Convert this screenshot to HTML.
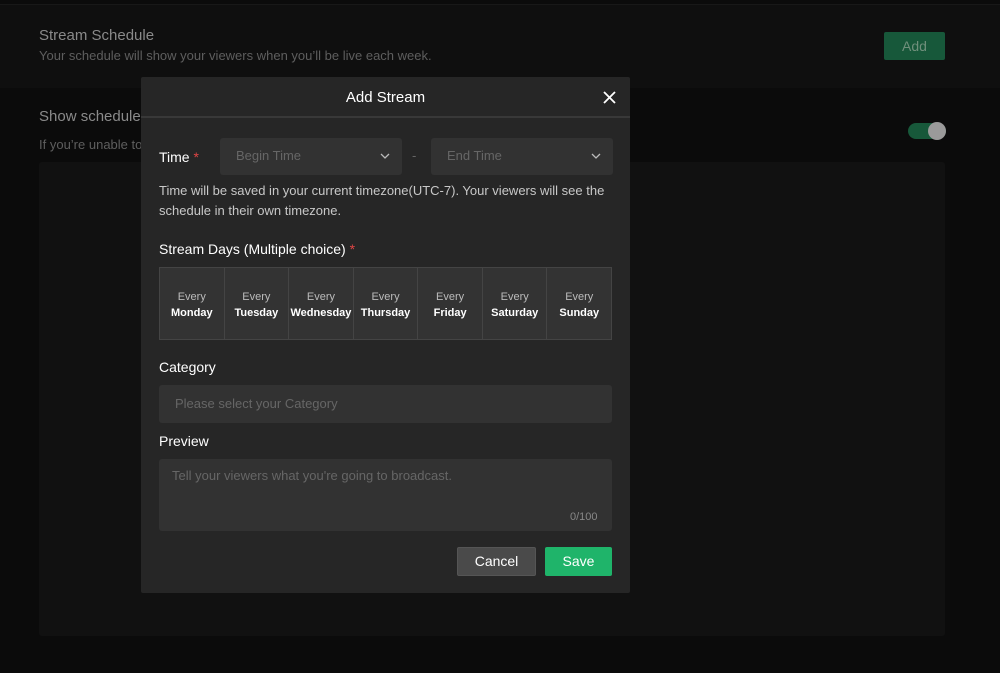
<!DOCTYPE html>
<html><head><style>
*{box-sizing:border-box;margin:0;padding:0}
body{width:1000px;height:673px;background:#0b0b0b;font-family:"Liberation Sans",sans-serif;position:relative;overflow:hidden}
.a{position:absolute}
.top{left:0;top:4px;width:1000px;height:84px;background:#0f0f0f;border-top:1px solid #181818}
.t1{left:39px;top:27px;font-size:15px;color:#8a8a8a}
.t2{left:39px;top:48px;font-size:13px;color:#5e5e5e}
.add{left:884px;top:32px;width:61px;height:28px;background:#17583a;border-radius:2px;color:#6f8f7b;font-size:14px;text-align:center;line-height:28px}
.s1{left:39px;top:108px;font-size:15px;color:#8a8a8a}
.s2{left:39px;top:137px;font-size:13px;color:#5e5e5e}
.tog{left:908px;top:123px;width:38px;height:16px;background:#17583a;border-radius:8px}
.tog i{position:absolute;right:0;top:-1px;width:18px;height:18px;border-radius:50%;background:#9a9a9a}
.panel{left:39px;top:162px;width:906px;height:474px;background:#111;border-radius:3px}
.m{left:141px;top:77px;width:489px;height:516px;background:#262626;border-radius:2px}
.hd{left:0;top:0;width:489px;height:41px;border-bottom:2px solid #383838;color:#fff;font-size:15px;text-align:center;line-height:41px}
.lb{color:#fff;font-size:14px}
.st{color:#e04545}
.inp{background:#323232;border-radius:3px;color:#666;font-size:13px}
.days{left:18px;top:190px;width:453px;height:73px;border:1px solid #444;display:flex;background:#333}
.days div{flex:1;border-right:1px solid #444;text-align:center;font-size:11px;color:#bbb;padding-top:21px;line-height:16px}
.days div:last-child{border-right:none}
.days b{color:#fff;font-weight:bold}
.btn{border-radius:2px;font-size:14px;text-align:center;line-height:27px;color:#fff}
</style></head><body>
<div class="a top"></div>
<div class="a t1">Stream Schedule</div>
<div class="a t2">Your schedule will show your viewers when you’ll be live each week.</div>
<div class="a add">Add</div>
<div class="a s1">Show schedule</div>
<div class="a s2">If you’re unable to</div>
<div class="a tog"><i></i></div>
<div class="a panel"></div>
<div class="a m">
 <div class="a hd">Add Stream</div>
 <svg class="a" style="left:462px;top:14px" width="13" height="13" viewBox="0 0 13 13"><path d="M1 1L12 12M12 1L1 12" stroke="#fff" stroke-width="1.8"/></svg>
 <div class="a lb" style="left:18px;top:72px">Time <span class="st">*</span></div>
 <div class="a inp" style="left:79px;top:61px;width:182px;height:37px;padding:10px 0 0 16px">Begin Time</div>
 <svg class="a" style="left:239px;top:76px" width="10" height="7"><path d="M1 1L5 5L9 1" stroke="#bbb" fill="none" stroke-width="1.3"/></svg>
 <div class="a" style="left:271px;top:71px;color:#666;font-size:13px">-</div>
 <div class="a inp" style="left:290px;top:61px;width:182px;height:37px;padding:10px 0 0 16px">End Time</div>
 <svg class="a" style="left:450px;top:76px" width="10" height="7"><path d="M1 1L5 5L9 1" stroke="#bbb" fill="none" stroke-width="1.3"/></svg>
 <div class="a" style="left:18px;top:104px;width:460px;color:#c8c8c8;font-size:13px;line-height:20px">Time will be saved in your current timezone(UTC-7). Your viewers will see the schedule in their own timezone.</div>
 <div class="a lb" style="left:18px;top:164px">Stream Days (Multiple choice) <span class="st">*</span></div>
 <div class="a days">
  <div>Every<br><b>Monday</b></div><div>Every<br><b>Tuesday</b></div><div>Every<br><b>Wednesday</b></div><div>Every<br><b>Thursday</b></div><div>Every<br><b>Friday</b></div><div>Every<br><b>Saturday</b></div><div>Every<br><b>Sunday</b></div>
 </div>
 <div class="a lb" style="left:18px;top:282px">Category</div>
 <div class="a inp" style="left:18px;top:308px;width:453px;height:38px;padding:11px 0 0 16px">Please select your Category</div>
 <div class="a lb" style="left:18px;top:356px">Preview</div>
 <div class="a inp" style="left:18px;top:382px;width:453px;height:72px;padding:9px 0 0 13px">Tell your viewers what you're going to broadcast.</div>
 <div class="a" style="left:429px;top:434px;color:#888;font-size:11px">0/100</div>
 <div class="a btn" style="left:316px;top:470px;width:79px;height:29px;background:#4a4a4a;border:1px solid #555">Cancel</div>
 <div class="a btn" style="left:404px;top:470px;width:67px;height:29px;background:#1fb46a;line-height:29px">Save</div>
</div>
</body></html>
